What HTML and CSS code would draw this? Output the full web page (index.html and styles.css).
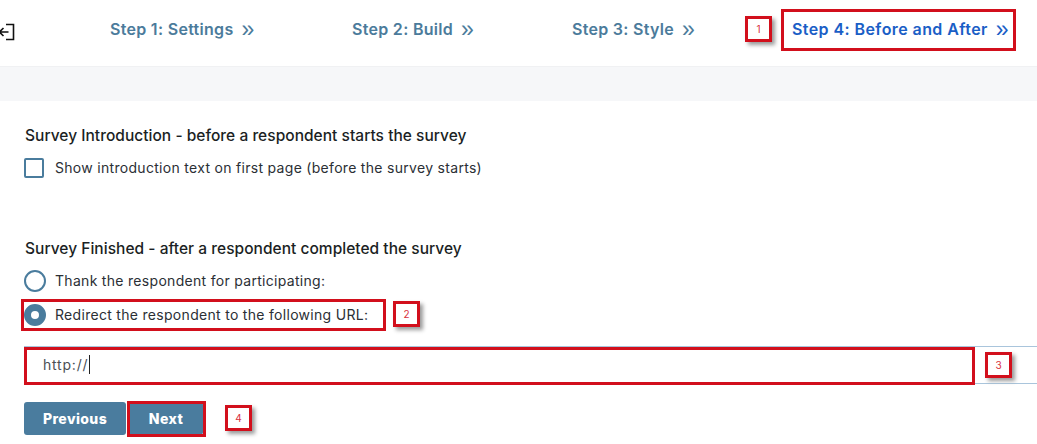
FILE: index.html
```html
<!DOCTYPE html>
<html lang="en">
<head>
<meta charset="utf-8">
<title>Survey – Before and After</title>
<link rel="stylesheet" href="styles.css">
</head>
<body>
<header class="topbar">
  <svg class="exit" width="16" height="18" viewBox="0 0 16 18" aria-hidden="true"><path d="M7 1.5h7.5v15H7M9.5 9H.5M4.5 5 .5 9l4 4" fill="none" stroke="#111" stroke-width="1.6"/></svg>
  <nav class="steps">
    <a class="step s1">Step 1: Settings<span class="chev">»</span></a>
    <a class="step s2">Step 2: Build<span class="chev">»</span></a>
    <a class="step s3">Step 3: Style<span class="chev">»</span></a>
    <a class="step s4 active">Step 4: Before and After<span class="chev">»</span></a>
  </nav>
</header>
<div class="band"></div>
<main class="content">
  <h2 class="title">Survey Introduction - before a respondent starts the survey</h2>
  <label class="row first"><span class="check"></span>Show introduction text on first page (before the survey starts)</label>
  <h2 class="title second">Survey Finished - after a respondent completed the survey</h2>
  <label class="row r1"><span class="radio"></span>Thank the respondent for participating:</label>
  <label class="row r2"><span class="radio on"></span>Redirect the respondent to the following URL:</label>
  <div class="url">http://<span class="caret"></span></div>
  <div class="buttons">
    <button class="btn prev">Previous</button>
    <button class="btn next">Next</button>
  </div>
</main>
<div class="mark m-step"></div>
<div class="mark m-radio"></div>
<div class="mark m-url"></div>
<div class="mark m-next"></div>
<div class="badge b1">1</div>
<div class="badge b2">2</div>
<div class="badge b3">3</div>
<div class="badge b4">4</div>
</body>
</html>
```
FILE: styles.css
```css
* { box-sizing: border-box; }
html, body { margin: 0; height: 444px; overflow: hidden; background: #fff; }
body { position: relative; font-family: "Inter", "Liberation Sans", sans-serif; color: #1e2227; }
.topbar { height: 66px; display: flex; align-items: center; background: #fff; }
.exit { flex: none; margin: -3px 0 0 -1px; }
.steps { display: flex; margin: -8px 0 0 95px; }
.step { font-size: 16px; font-weight: 600; color: #4b7b9b; white-space: nowrap; letter-spacing: .3px; }
.s1 { width: 242px; }
.s2 { width: 220px; }
.s3 { width: 220px; }
.s4 { letter-spacing: .42px; }
.active { color: #1a5ec6; }
.chev { font-family: "Liberation Sans", sans-serif; font-size: 23px; font-weight: 400; line-height: 16px; margin-left: 8px; vertical-align: -2px; }
.band { height: 35px; background: #f6f7f9; border-top: 1px solid #f0f1f3; }
.content { padding: 25px 0 0 25px; }
.title { margin: 0; font-size: 15.5px; line-height: 20px; font-weight: 500; color: #1b1f24; letter-spacing: .03px; }
.second { margin-top: 61px; }
.row { display: flex; align-items: center; margin-left: -1px; font-size: 14px; line-height: 20px; color: #2b2f35; letter-spacing: .3px; }
.first { margin-top: 12px; height: 20px; }
.r1 { margin-top: 11px; height: 22px; }
.r2 { margin-top: 12px; height: 22px; }
.check { width: 20px; height: 20px; margin-right: 11px; border: 2px solid #4a7c9d; border-radius: 2px; }
.radio { width: 22px; height: 22px; margin-right: 9px; border: 2px solid #4a7c9d; border-radius: 50%; }
.radio.on { border: 7px solid #4a7c9d; background: #fff; }
.url { margin: 20px 0 0 -1px; height: 38px; display: flex; align-items: center; padding: 0 0 2px 18px; border: 1px solid #a9c5dc; border-right: 0; font-size: 14px; letter-spacing: .8px; color: #4a4f55; }
.caret { width: 1px; height: 19px; background: #222; margin-left: 1px; }
.buttons { display: flex; gap: 3px; margin: 18px 0 0 -1px; }
.btn { height: 33px; border: 0; border-radius: 3px; background: #4a7c9e; color: #fff; font: 800 14px "Inter", "Liberation Sans", sans-serif; letter-spacing: .4px; }
.prev { width: 102px; }
.next { width: 74px; }
.mark { position: absolute; border: 3px solid #d20f1c; }
.m-step { left: 781px; top: 9px; width: 235px; height: 42px; }
.m-radio { left: 21px; top: 299px; width: 365px; height: 32px; }
.m-url { left: 24px; top: 347px; width: 951px; height: 38px; }
.m-next { left: 127px; top: 401px; width: 79px; height: 36px; }
.badge { position: absolute; width: 27px; height: 26px; display: flex; align-items: center; justify-content: center; background: #fff; border: 3px solid #d20f1c; box-shadow: 3px 3px 4px #9a9a9a; color: #d9313c; font-size: 10px; }
.b1 { left: 745px; top: 16px; }
.b2 { left: 393px; top: 301px; }
.b3 { left: 985px; top: 352px; }
.b4 { left: 225px; top: 405px; }
```
